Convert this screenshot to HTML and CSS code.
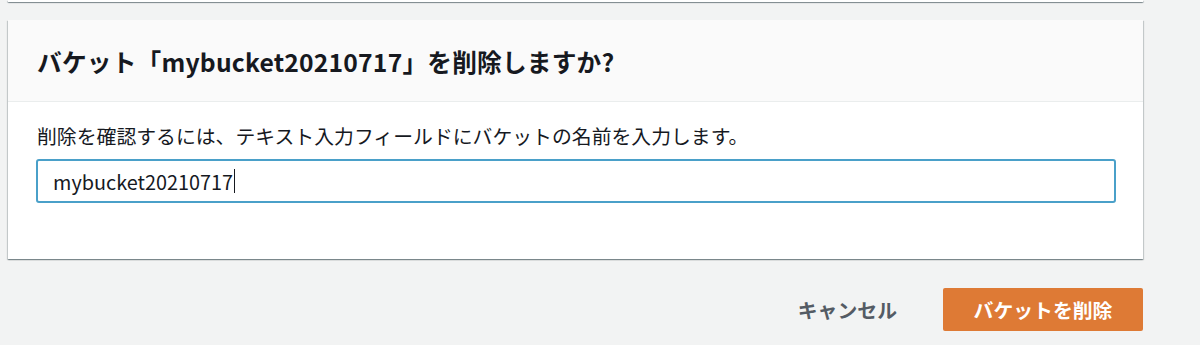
FILE: index.html
```html
<!DOCTYPE html>
<html lang="ja">
<head>
<meta charset="utf-8">
<link rel="stylesheet" href="styles.css">
</head>
<body>
<div class="page">
  <div class="prev-card"></div>
  <section class="card">
    <header class="card-header">
      <h2 class="title">バケット「mybucket20210717」を削除しますか?</h2>
    </header>
    <div class="card-body">
      <label class="label">削除を確認するには、テキスト入力フィールドにバケットの名前を入力します。</label>
      <div class="input"><span class="value">mybucket20210717</span><span class="caret"></span></div>
    </div>
  </section>
  <div class="actions">
    <button class="btn-link">キャンセル</button>
    <button class="btn-primary">バケットを削除</button>
  </div>
</div>
</body>
</html>
```
FILE: styles.css
```css
html, body {
  margin: 0;
  padding: 0;
  background: #f2f3f3;
  font-family: "Noto Sans CJK JP", "Noto Sans", sans-serif;
  color: #16191f;
}
.page {
  width: 1135px;
  margin-left: 8px;
}
.prev-card {
  height: 2px;
  background: #fff;
  box-shadow: 0 1px 1px 0 rgba(0,28,36,.3), 1px 1px 1px 0 rgba(0,28,36,.15), -1px 1px 1px 0 rgba(0,28,36,.15);
}
.card {
  margin-top: 18px;
  background: #fff;
  box-shadow: 0 1px 1px 0 rgba(0,28,36,.3), 1px 1px 1px 0 rgba(0,28,36,.15), -1px 1px 1px 0 rgba(0,28,36,.15);
}
.card-header {
  background: #fafafa;
  border-bottom: 1px solid #eaeded;
  height: 81px;
  display: flex;
  align-items: center;
  padding: 0 29px;
}
.title {
  margin: 0;
  font-size: 24.7px;
  font-weight: 700;
  line-height: 30px;
  letter-spacing: 0.2px;
}
.card-body {
  padding: 22px 27px 56px 28px;
  display: flex;
  flex-direction: column;
}
.label {
  display: block;
  font-size: 19.85px;
  line-height: 24px;
  padding-left: 1px;
  margin-bottom: 11px;
}
.input {
  height: 44px;
  box-sizing: border-box;
  border: 2px solid #4aa0c9;
  border-radius: 3px;
  display: flex;
  align-items: center;
  padding-left: 15px;
  font-size: 19.85px;
}
.caret {
  display: inline-block;
  width: 1px;
  height: 24px;
  background: #16191f;
  margin-left: 1px;
}
.actions {
  display: flex;
  justify-content: flex-end;
  align-items: center;
  margin-top: 28px;
}
.btn-link {
  background: none;
  border: none;
  font-family: inherit;
  font-weight: 700;
  font-size: 19.85px;
  color: #545b64;
  padding: 8px 20px;
  margin-right: 26px;
}
.btn-primary {
  width: 200px;
  height: 43px;
  background: #de7a35;
  border: none;
  border-radius: 2px;
  color: #fff;
  font-family: inherit;
  font-weight: 700;
  font-size: 19.85px;
}
```
